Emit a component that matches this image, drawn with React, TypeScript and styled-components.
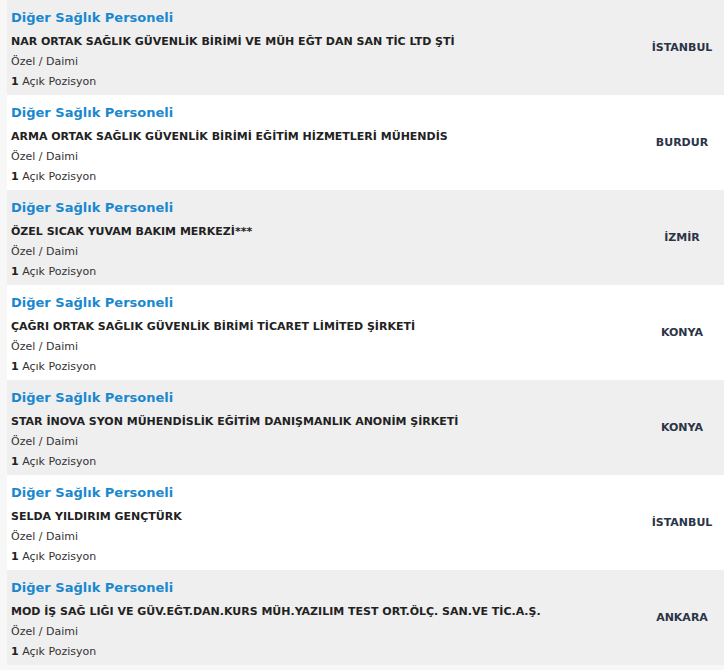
import * as React from 'react'
import styled, { createGlobalStyle } from 'styled-components'

const GlobalStyle = createGlobalStyle`
  html, body {
    margin: 0;
    padding: 0;
    background: #f7f7f7;
  }
  body {
    font-family: Verdana, "DejaVu Sans", sans-serif;
  }
`

type Job = {
  title: string
  company: string
  type: string
  count: number
  city: string
}

const jobs: Job[] = [
  { title: 'Diğer Sağlık Personeli', company: 'NAR ORTAK SAĞLIK GÜVENLİK BİRİMİ VE MÜH EĞT DAN SAN TİC LTD ŞTİ', type: 'Özel / Daimi', count: 1, city: 'İSTANBUL' },
  { title: 'Diğer Sağlık Personeli', company: 'ARMA ORTAK SAĞLIK GÜVENLİK BİRİMİ EĞİTİM HİZMETLERİ MÜHENDİS', type: 'Özel / Daimi', count: 1, city: 'BURDUR' },
  { title: 'Diğer Sağlık Personeli', company: 'ÖZEL SICAK YUVAM BAKIM MERKEZİ***', type: 'Özel / Daimi', count: 1, city: 'İZMİR' },
  { title: 'Diğer Sağlık Personeli', company: 'ÇAĞRI ORTAK SAĞLIK GÜVENLİK BİRİMİ TİCARET LİMİTED ŞİRKETİ', type: 'Özel / Daimi', count: 1, city: 'KONYA' },
  { title: 'Diğer Sağlık Personeli', company: 'STAR İNOVA SYON MÜHENDİSLİK EĞİTİM DANIŞMANLIK ANONİM ŞİRKETİ', type: 'Özel / Daimi', count: 1, city: 'KONYA' },
  { title: 'Diğer Sağlık Personeli', company: 'SELDA YILDIRIM GENÇTÜRK', type: 'Özel / Daimi', count: 1, city: 'İSTANBUL' },
  { title: 'Diğer Sağlık Personeli', company: 'MOD İŞ SAĞ LIĞI VE GÜV.EĞT.DAN.KURS MÜH.YAZILIM TEST ORT.ÖLÇ. SAN.VE TİC.A.Ş.', type: 'Özel / Daimi', count: 1, city: 'ANKARA' },
]

const List = styled.div`
  display: flex;
  flex-direction: column;
  padding-left: 7px;
`

const Row = styled.div<{ $odd: boolean }>`
  display: flex;
  align-items: center;
  height: 95px;
  background: ${(p) => (p.$odd ? '#efefef' : '#ffffff')};
`

const Info = styled.div`
  flex: 1;
  display: flex;
  flex-direction: column;
  padding: 4px 0 0 4px;
`

const Title = styled.a`
  font-family: "DejaVu Sans", Verdana, sans-serif;
  font-size: 13px;
  font-weight: bold;
  color: #1a88cf;
  line-height: 20px;
  text-decoration: none;
`

const Company = styled.div`
  font-family: "DejaVu Sans", Verdana, sans-serif;
  font-size: 11px;
  font-weight: bold;
  color: #222;
  line-height: 20px;
  margin-top: 4px;
`

const Detail = styled.div`
  font-family: "DejaVu Sans", Verdana, sans-serif;
  font-size: 11px;
  color: #333;
  line-height: 20px;

  b {
    color: #222;
  }
`

const City = styled.div`
  width: 84px;
  text-align: center;
  font-family: "DejaVu Sans", Verdana, sans-serif;
  font-size: 11px;
  font-weight: bold;
  color: #2b3447;
`

export default function App() {
  return (
    <>
      <GlobalStyle />
      <List>
        {jobs.map((job, i) => (
          <Row key={i} $odd={i % 2 === 0}>
            <Info>
              <Title href="#">{job.title}</Title>
              <Company>{job.company}</Company>
              <Detail>{job.type}</Detail>
              <Detail>
                <b>{job.count}</b> Açık Pozisyon
              </Detail>
            </Info>
            <City>{job.city}</City>
          </Row>
        ))}
      </List>
    </>
  )
}
